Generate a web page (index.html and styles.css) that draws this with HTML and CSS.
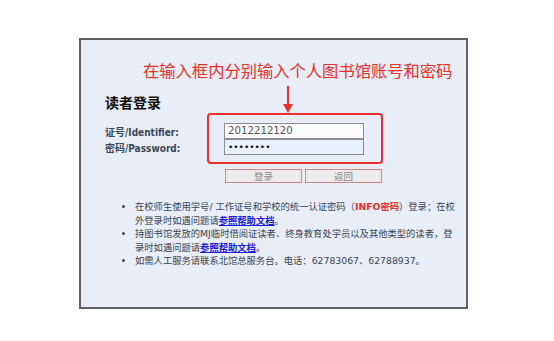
FILE: index.html
```html
<!DOCTYPE html>
<html lang="zh-CN">
<head>
<meta charset="utf-8">
<link rel="stylesheet" href="styles.css">
</head>
<body>
<div class="panel">
  <div class="note">在输入框内分别输入个人图书馆账号和密码</div>
  <svg class="arrow" width="12" height="28" viewBox="0 0 12 28"><rect x="5" y="0" width="2" height="19" fill="#e8302c"/><polygon points="1,18 11,18 6,27" fill="#e8302c"/></svg>
  <div class="highlight"></div>
  <h1 class="heading">读者登录</h1>
  <div class="form">
    <label class="label">证号/Identifier:</label>
    <div class="input">2012212120</div>
    <label class="label">密码/Password:</label>
    <div class="input pw">••••••••</div>
  </div>
  <div class="buttons">
    <div class="btn">登录</div>
    <div class="btn">返回</div>
  </div>
  <ul class="tips">
    <li>在校师生使用学号/ 工作证号和学校的统一认证密码（<b class="red">INFO密码</b>）登录；在校外登录时如遇问题请<a class="link">参照帮助文档</a>。</li>
    <li>持图书馆发放的MJ临时借阅证读者、终身教育处学员以及其他类型的读者，登录时如遇问题请<a class="link">参照帮助文档</a>。</li>
    <li>如需人工服务请联系北馆总服务台。电话：62783067、62788937。</li>
  </ul>
</div>
</body>
</html>
```
FILE: styles.css
```css
html, body {
  margin: 0;
  padding: 0;
  background: #ffffff;
}
body {
  font-family: "DejaVu Sans", "Noto Sans CJK SC", sans-serif;
  color: #333;
}
.panel {
  position: relative;
  box-sizing: border-box;
  margin: 38px 0 0 79px;
  width: 389px;
  height: 271px;
  border: 2px solid #5f6165;
  background: #e9edf5;
  padding: 0 0 0 24px;
}
.note {
  margin: 20px 0 0 38px;
  font-family: "Noto Sans CJK SC", sans-serif;
  font-size: 16.3px;
  line-height: 20px;
  color: #e8302c;
  white-space: nowrap;
}
.arrow {
  position: absolute;
  left: 201px;
  top: 46px;
}
.highlight {
  position: absolute;
  left: 126px;
  top: 73px;
  width: 176px;
  height: 51px;
  box-sizing: border-box;
  border: 2px solid #e8302c;
  border-radius: 4px;
}
.heading {
  margin: 13px 0 0 0;
  font-family: "Noto Sans CJK SC", sans-serif;
  font-size: 14px;
  line-height: 18px;
  font-weight: bold;
  color: #111;
}
.form {
  display: grid;
  grid-template-columns: 119px 140px;
  margin-top: 12px;
}
.label {
  display: flex;
  align-items: center;
  font-size: 10px;
  color: #3b4656;
  font-weight: 600;
  white-space: nowrap;
  font-family: "DejaVu Sans Condensed", "DejaVu Sans", "Noto Sans CJK SC", sans-serif;
}
.input {
  box-sizing: border-box;
  height: 16px;
  border: 1px solid #8a8d92;
  background: #fbfbfd;
  font-family: "DejaVu Sans", sans-serif;
  font-size: 10.2px;
  line-height: 14px;
  padding-left: 3px;
  color: #555;
}
.pw {
  background: #e8f0fe;
  color: #111;
  font-size: 9px;
}
.buttons {
  display: flex;
  gap: 3px;
  margin: 14px 0 0 120px;
}
.btn {
  box-sizing: border-box;
  width: 77px;
  height: 14px;
  border: 1px solid #c98b8b;
  background: #ececec;
  color: #8a8a8a;
  font-family: "Noto Sans CJK SC", sans-serif;
  font-size: 9.5px;
  line-height: 12px;
  text-align: center;
}
.tips {
  margin: 17px 0 0 0;
  padding: 0 0 0 30px;
  width: 326px;
  font-family: "DejaVu Sans", "Noto Sans CJK SC", sans-serif;
  font-size: 9.3px;
  line-height: 13.5px;
  color: #3b4656;
}
.red {
  display: inline-block;
  color: #e8302c;
}
.link {
  display: inline-block;
  color: #1a1adf;
  text-decoration: underline;
  font-weight: bold;
}
```
